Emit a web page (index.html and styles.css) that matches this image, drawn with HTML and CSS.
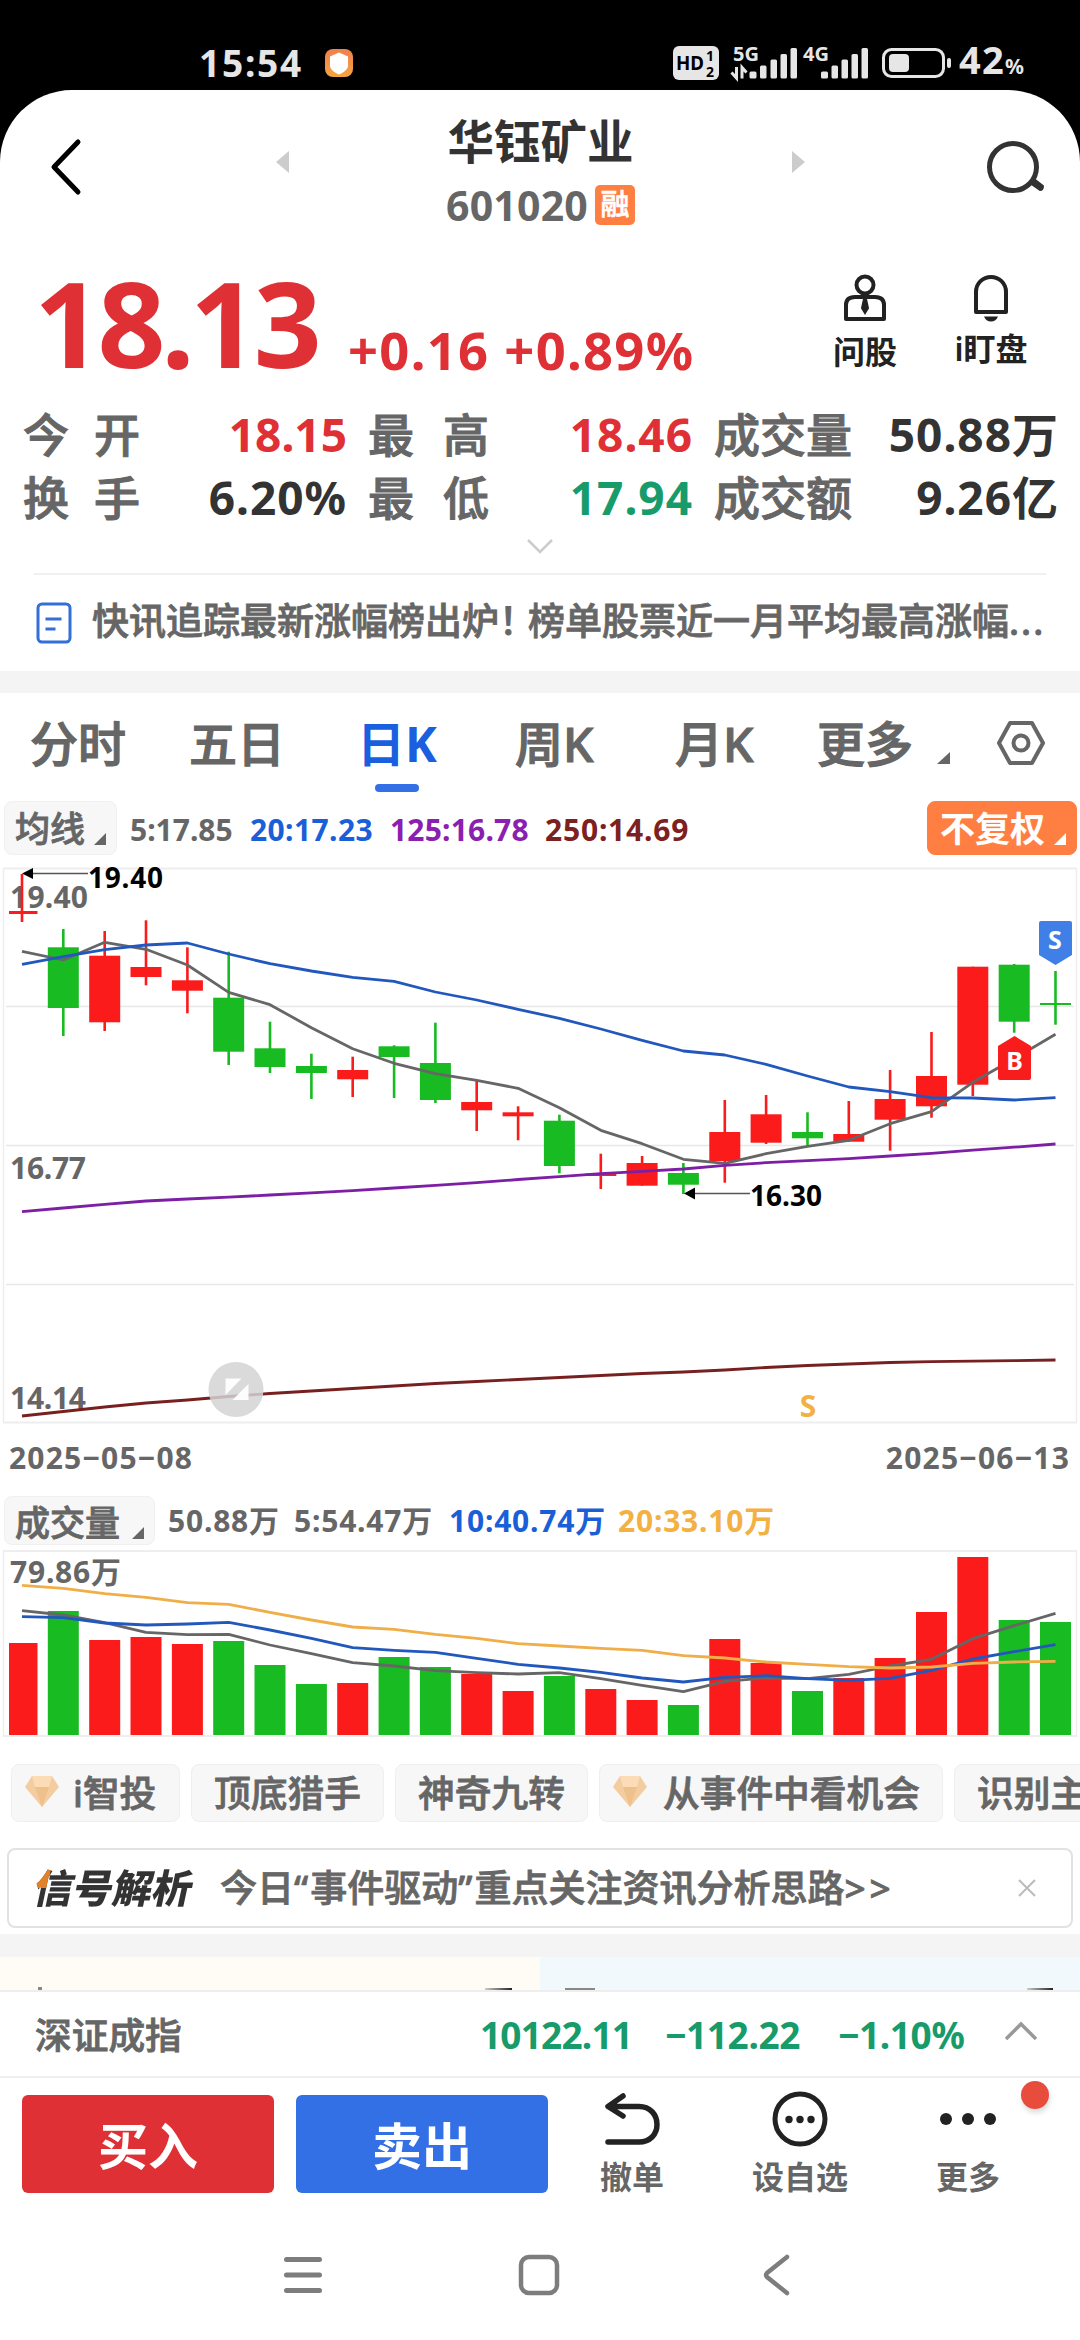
FILE: index.html
```html
<!DOCTYPE html>
<html lang="zh-CN">
<head>
<meta charset="utf-8">
<title>华钰矿业 601020</title>
<link rel="stylesheet" href="styles.css">
</head>
<body>
<div class="phone">
  <div class="status">
    <span class="clock">15:54</span>
    <svg class="status-app" width="28" height="28" viewBox="0 0 28 28"><defs><linearGradient id="og" x2="0" y2="1"><stop stop-color="#ef8050"/><stop offset="1" stop-color="#f5a540"/></linearGradient></defs><rect width="28" height="28" rx="8" fill="url(#og)"/><path d="M14 3.500l9 4v9c0 4-5 7.500-9 9-4-1.500-9-5-9-9v-9z" fill="#fff"/></svg>
    <svg class="status-icons" width="290" height="44" viewBox="670 40 290 44">
      <rect x="673" y="45" width="46" height="34" rx="6" fill="#e6e6e6"/>
      <g class="st-dark"><text x="676" y="69" font-size="19" textLength="28" lengthAdjust="spacingAndGlyphs">HD</text><text x="706" y="60" font-size="14">1</text><text x="706" y="75.500" font-size="14">2</text></g>
      <g class="st-light"><text x="733" y="60" font-size="20">5G</text><text x="803" y="60" font-size="20">4G</text></g>
      <g fill="#e6e6e6">
        <rect x="749.500" y="70.500" width="7" height="7" rx="1.500"/><rect x="760" y="64.500" width="6.500" height="13" rx="1.500"/><rect x="770.500" y="58.500" width="6.500" height="19" rx="1.500"/><rect x="780.500" y="53" width="6.500" height="24.500" rx="1.500"/><rect x="790.500" y="47" width="6.500" height="30.500" rx="1.500"/>
        <rect x="821" y="70.500" width="7" height="7" rx="1.500"/><rect x="831.500" y="64.500" width="6.500" height="13" rx="1.500"/><rect x="841.500" y="58.500" width="6.500" height="19" rx="1.500"/><rect x="851.500" y="53" width="6.500" height="24.500" rx="1.500"/><rect x="861.500" y="47" width="6.500" height="30.500" rx="1.500"/>
      </g>
      <path d="M736.500 66v11l-5-5.500M742 77.500V66.500l4.500 5" stroke="#e6e6e6" stroke-width="3" fill="none"/>
      <rect x="883.500" y="48.500" width="60" height="27" rx="8" fill="none" stroke="#e6e6e6" stroke-width="3"/>
      <rect x="889" y="53" width="20" height="18" rx="4" fill="#e6e6e6"/>
      <rect x="947" y="57" width="4" height="10" rx="2" fill="#e6e6e6"/>
    </svg>
    <span class="battery">42<small>%</small></span>
  </div>

  <main class="app">
    <header class="head">
      <svg class="back" width="32" height="60" viewBox="0 0 32 60"><path d="M28 5L4 30l24 25" fill="none" stroke="#000" stroke-width="5" stroke-linecap="round" stroke-linejoin="round"/></svg>
      <svg class="tri" width="13" height="22" viewBox="0 0 13 22"><path d="M13 0v22L0 11z" fill="#ccc"/></svg>
      <div class="title">
        <h1>华钰矿业</h1>
        <div class="code"><span>601020</span><b>融</b></div>
      </div>
      <svg class="tri" width="13" height="22" viewBox="0 0 13 22"><path d="M0 0v22L13 11z" fill="#ccc"/></svg>
      <svg class="search" width="60" height="60" viewBox="0 0 60 60"><circle cx="29" cy="30" r="23.500" fill="none" stroke="#333" stroke-width="5"/><path d="M46 46l4-4 9 7q0 4-3 4z" fill="#333" stroke="#333" stroke-width="2" stroke-linejoin="round"/></svg>
    </header>

    <section class="quote">
      <span class="price">18.13</span>
      <span class="change">+0.16 +0.89%</span>
      <div class="tool t1">
        <svg width="44" height="48" viewBox="0 0 44 48" fill="none" stroke="#222" stroke-width="4"><circle cx="22" cy="11" r="8.500"/><path d="M3 45V31q0-8 9-8h20q9 0 9 8v14z" stroke-linejoin="round"/><path d="M21 25h2l2 9-3 5-3-5z" fill="#222" stroke-width="2"/></svg>
        <span>问股</span>
      </div>
      <div class="tool t2">
        <svg width="44" height="48" viewBox="0 0 44 48"><path d="M7 38V18C7 9 14 3 22 3s15 6 15 15v20z" fill="none" stroke="#222" stroke-width="4" stroke-linejoin="round"/><path d="M15 42.500h14q-2 5-7 5t-7-5z" fill="#222"/></svg>
        <span>i盯盘</span>
      </div>
    </section>

    <section class="stats">
      <span class="wide">今开</span><em class="up open">18.15</em><span class="wide hi">最高</span><em class="up">18.46</em><span>成交量</span><em>50.88万</em>
      <span class="wide">换手</span><em>6.20%</em><span class="wide hi">最低</span><em class="down">17.94</em><span>成交额</span><em>9.26亿</em>
    </section>
    <svg class="expand" width="28" height="16" viewBox="0 0 28 16"><path d="M2 1l12 12L26 1" fill="none" stroke="#ccc" stroke-width="2.500"/></svg>

    <a class="news">
      <svg width="36" height="42" viewBox="0 0 36 42" fill="none" stroke="#336fd8" stroke-width="3"><rect x="2" y="2" width="32" height="38" rx="4"/><path d="M9.500 17h16M9.500 27h10"/></svg>
      <span>快讯追踪最新涨幅榜出炉<i>！</i>榜单股票近一月平均最高涨幅<tt>...</tt></span>
    </a>
    <div class="band"></div>

    <nav class="tabs">
      <span class="tab-a">分时</span><span class="tab-b">五日</span><span class="tab-c on">日K</span><span class="tab-d">周K</span><span class="tab-e">月K</span><span class="tab-f">更多</span>
      <svg class="corner" width="13" height="12" viewBox="0 0 13 12"><path d="M13 0v12H0z" fill="#666"/></svg>
      <svg class="gear" width="48" height="46" viewBox="0 0 48 46" fill="none" stroke="#666" stroke-width="4"><path d="M13 3h22l11 20-11 20H13L2 23z" stroke-linejoin="round"/><circle cx="24" cy="23" r="7.500"/></svg>
    </nav>

    <div class="legend ma">
      <button class="pill"><span>均线</span><svg width="12" height="12" viewBox="0 0 12 12"><path d="M12 0v12H0z" fill="#666"/></svg></button>
      <span class="l1">5:17.85</span><span class="l2 blue">20:17.23</span><span class="l3 purple">125:16.78</span><span class="l4 maroon">250:14.69</span>
      <button class="pill adjust"><span>不复权</span><svg width="12" height="12" viewBox="0 0 12 12"><path d="M12 0v12H0z" fill="#fff"/></svg></button>
    </div>

    <svg class="kchart" id="kchart" width="1080" height="570" viewBox="0 860 1080 570">
      <path d="M3.500 868V1422.500M1076.500 868V1422.500" stroke="#eee" stroke-width="1.500"/>
      <path d="M3 868.500H1077M3 1422.500H1077" stroke="#eee" stroke-width="2"/>
      <path d="M6 1006.500H1074M6 1145.500H1074M6 1284.500H1074" stroke="#e8e8e8" stroke-width="1.500"/>
      <g class="axis"><text x="10" y="908" textLength="78">19.40</text><text x="10" y="1179" textLength="76">16.77</text><text x="10" y="1409" textLength="76">14.14</text></g>
      <g id="candles"></g>
      <g id="klines" class="lines"></g>
      <g class="mark"><text x="88" y="888" textLength="75">19.40</text><text x="750" y="1206" textLength="72">16.30</text></g>
      <path d="M32 873.500H88M693 1193.500H750" stroke="#555" stroke-width="1.500"/>
      <path d="M22 873.500l11-5.500v11zM684 1193.500l11-6v12z"/>
      <path d="M1041 921h29q2 0 2 2v32l-16.500 10-16.500-10v-32q0-2 2-2z" fill="#4080e6"/>
      <path d="M1014.500 1036l16.500 10v32q0 2-2 2h-29q-2 0-2-2v-32z" fill="#f81c1c"/>
      <g class="flag"><text x="1055" y="949">S</text><text x="1014.500" y="1070">B</text></g>
      <circle cx="236" cy="1389.500" r="27.500" fill="#d3d3d3" fill-opacity=".85"/>
      <path d="M225.500 1378.500h16l-16 16.500zM248.500 1384v16h-16z" fill="#fff" fill-opacity=".95"/>
      <text class="s-mark" x="808" y="1417">S</text>
    </svg>
    <div class="dates"><span>2025−05−08</span><span>2025−06−13</span></div>

    <div class="legend vol">
      <button class="pill"><span>成交量</span><svg width="12" height="12" viewBox="0 0 12 12"><path d="M12 0v12H0z" fill="#666"/></svg></button>
      <span class="v1">50.88万</span><span class="v2">5:54.47万</span><span class="v3 blue">10:40.74万</span><span class="v4 amber">20:33.10万</span>
    </div>
    <svg class="vchart" width="1080" height="190" viewBox="0 1549 1080 190">
      <path d="M3.500 1551V1736M1076.500 1551V1736" stroke="#eee" stroke-width="1.500"/>
      <path d="M3 1551H1077M3 1736H1077" stroke="#eee" stroke-width="2"/>
      <text class="axis" x="10" y="1583" textLength="111">79.86万</text>
      <g id="bars"></g>
      <g id="vlines" class="lines"></g>
    </svg>

    <div class="chips">
      <span class="gem"><svg width="34" height="31" viewBox="0 0 34 31"><path d="M7 0h20l7 11-17 20L0 11z" fill="#f3cda0"/><path d="M7 0h20l-3 11H10z" fill="#fbdcb6"/><path d="M10 11h14l-7 20z" fill="#eec08c"/></svg>i智投</span>
      <span>顶底猎手</span><span>神奇九转</span>
      <span class="gem long"><svg width="34" height="31" viewBox="0 0 34 31"><path d="M7 0h20l7 11-17 20L0 11z" fill="#f3cda0"/><path d="M7 0h20l-3 11H10z" fill="#fbdcb6"/><path d="M10 11h14l-7 20z" fill="#eec08c"/></svg>从事件中看机会</span>
      <span>识别主力</span>
    </div>

    <div class="banner">
      <strong>信号解析</strong>
      <span>今日<q>“</q>事件驱动<q>”</q>重点关注资讯分析思路<i>&gt;&gt;</i></span>
      <svg width="18" height="18" viewBox="0 0 18 18"><path d="M1 1l16 16M17 1L1 17" stroke="#bbb" stroke-width="2"/></svg>
    </div>
    <div class="band low"></div>
    <div class="panels">
      <div class="warm"><i class="p1"></i><i class="p2"></i></div>
      <div class="cool"><i class="p3"></i><i class="p4"></i></div>
    </div>
  </main>

  <div class="index">
    <span class="name">深证成指</span><b class="n1">10122.11</b><b class="n2">−112.22</b><b class="n3">−1.10%</b>
    <svg width="34" height="20" viewBox="0 0 34 20"><path d="M2 18L17 3l15 15" fill="none" stroke="#999" stroke-width="3.500"/></svg>
  </div>

  <footer class="trade">
    <button class="buy">买入</button>
    <button class="sell">卖出</button>
    <div class="act a1"><svg width="58" height="56" viewBox="0 0 58 56" fill="none" stroke="#222" stroke-width="5.500" stroke-linecap="round" stroke-linejoin="round"><path d="M20 5L5 15.500l15 9.500M6 15.500h30c11 0 18 8 18 18s-7 17.500-18 17.500H5"/></svg><span>撤单</span></div>
    <div class="act a2"><svg width="58" height="56" viewBox="0 0 58 56"><circle cx="29" cy="28" r="25" fill="none" stroke="#222" stroke-width="5"/><g fill="#222"><circle cx="18" cy="28.500" r="3.700"/><circle cx="29" cy="28.500" r="3.700"/><circle cx="40" cy="28.500" r="3.700"/></g></svg><span>设自选</span></div>
    <div class="act a3"><svg width="58" height="56" viewBox="0 0 58 56" fill="#222"><circle cx="7" cy="28" r="6"/><circle cx="29" cy="28" r="6"/><circle cx="51" cy="28" r="6"/></svg><span>更多</span><i class="dot"></i></div>
  </footer>

  <nav class="sysnav">
    <svg width="38" height="42" viewBox="0 0 38 42"><path d="M2.500 5.500h33M2.500 21h33M2.500 36.500h33" stroke="#7d7d7d" stroke-width="5" stroke-linecap="round"/></svg>
    <svg width="42" height="42" viewBox="0 0 42 42"><rect x="3" y="3" width="36" height="36" rx="8" fill="none" stroke="#7d7d7d" stroke-width="4.500"/></svg>
    <svg width="28" height="42" viewBox="0 0 28 42"><path d="M25 3L5 19q-2 2 0 4l20 16" fill="none" stroke="#7d7d7d" stroke-width="4.500" stroke-linecap="round"/></svg>
  </nav>
</div>
<script src="chart.js"></script>
</body>
</html>
```
FILE: styles.css
```css
* { box-sizing: border-box; margin: 0; padding: 0; }
body { background: #000; font-family: "Noto Sans", "Noto Sans CJK SC", sans-serif; color: #666; font-weight: 600; }
button { border: 0; font: inherit; color: inherit; }
svg { display: block; flex: none; }
.phone { width: 1080px; height: 2340px; overflow: hidden; display: flex; flex-direction: column; background: #000; white-space: nowrap; }

.status { height: 90px; flex: none; display: flex; align-items: center; padding: 35px 0 0 199px; color: #e6e6e6; }
.clock { font-size: 37px; line-height: 48px; width: 126px; letter-spacing: 1.800px; font-weight: 700; }
.status-icons { margin-left: 317px; }
.battery { font-size: 38px; line-height: 48px; margin-left: -1px; font-weight: 700; letter-spacing: 1.200px; }
.battery small { font-size: 21px; font-weight: 700; }
.st-dark { fill: #000; font-weight: 700; }
.st-light { fill: #e6e6e6; font-weight: 700; }

.app { height: 1900px; flex: none; background: #fff; border-radius: 72px 72px 0 0; overflow: hidden; display: flex; flex-direction: column; }
.head { height: 170px; flex: none; display: flex; align-items: flex-start; padding: 23px 36px 0 50px; }
.head .back { margin-top: 24px; }
.head .tri { margin-top: 38px; }
.head .tri:nth-of-type(2) { margin-left: 194px; }
.head .title { width: 503px; text-align: center; }
.title h1 { font-size: 46.500px; line-height: 56px; font-weight: 700; color: #333; }
.title .code { display: flex; justify-content: center; align-items: center; gap: 7px; height: 42px; margin-top: 15px; font-size: 41px; line-height: 42px; font-weight: 700; }
.title .code span { letter-spacing: .2px; }
.title .code b { width: 40px; height: 40px; border-radius: 5px; background: #ff7f42; color: #fff; font-size: 29px; line-height: 38px; font-weight: 500; -webkit-text-stroke: .6px; }
.head .search { margin-left: 179px; margin-top: 24px; }

.quote { height: 140px; flex: none; display: flex; align-items: flex-start; padding-left: 34px; color: #df3035; }
.price { font-size: 119px; line-height: 124px; width: 314px; font-weight: 700; letter-spacing: -4.500px; }
.change { font-size: 52.500px; line-height: 56px; margin-top: 62px; width: 479px; font-weight: 700; letter-spacing: 1.300px; }
.tool { display: flex; flex-direction: column; align-items: center; color: #222; font-size: 32px; line-height: 40px; width: 76px; margin-top: 14px; }
.tool span { margin-top: 10px; font-weight: 600; }
.t2 { margin-left: 50px; }
.t2 span { margin-top: 7px; }

.stats { flex: none; height: 131px; display: grid; grid-template-columns: 115px 209px 139px 207px 158px 208px; grid-template-rows: 63.500px 63.500px; padding: 2px 0 0 23px; align-items: center; font-size: 46px; line-height: 60px; }
.stats span { font-weight: 500; -webkit-text-stroke: 1px; }
.stats span:nth-of-type(3n) { padding-left: 21px; }
.stats .wide { letter-spacing: 25px; }
.stats .wide.hi { padding-left: 21px; letter-spacing: 29px; }
.stats em { font-style: normal; color: #333; text-align: right; font-weight: 700; letter-spacing: 1px; }
.stats em.up { color: #df3035; }
.stats em.open { letter-spacing: 0; }
.stats em.down { color: #179b6b; }
.expand { margin: 8px auto 0; }

.news { margin: 18px 34px 0; height: 98px; flex: none; border-top: 2px solid #f0f0f0; display: flex; align-items: flex-start; gap: 20px; padding: 27px 0 0 2px; }
.news span { font-size: 37px; line-height: 38px; font-weight: 500; -webkit-text-stroke: .8px; }
.news i { font-style: normal; letter-spacing: -8px; }
.news tt { font-family: inherit; letter-spacing: 2px; }
.band { height: 22px; flex: none; background: #f4f4f4; }

.tabs { height: 101px; flex: none; display: flex; padding: 19px 0 0 30px; font-size: 48px; line-height: 64px; font-weight: 500; -webkit-text-stroke: 1.200px; }
.tab-a { width: 159px; } .tab-b { width: 168px; } .tab-c { width: 158px; } .tab-d { width: 160px; } .tab-e { width: 142px; } .tab-f { width: 120px; }
.tabs .on { color: #1a5fe0; font-weight: 700; -webkit-text-stroke: 0; }
.tabs .on::after { content: ""; display: block; width: 44px; height: 8px; border-radius: 4px; background: #336fe5; margin: 8px 0 0 18px; }
.tabs .corner { margin-top: 40px; }
.tabs .gear { margin: 8px 0 0 47px; }

.legend { flex: none; display: flex; align-items: center; font-size: 30px; font-weight: 700; padding: 0 3px 0 4px; }
.legend.ma { height: 66px; align-items: flex-start; margin-top: 7px; }
.legend > span { line-height: 57px; }
.pill { height: 54px; background: #f7f7f7; border: 1px solid #f0f0f0; border-radius: 8px; display: flex; align-items: flex-end; padding: 0 10px 9px; gap: 9px; font-size: 35px; font-weight: 500; -webkit-text-stroke: .8px; }
.pill span { line-height: 32px; }
.pill.adjust { background: #ff7f42; border-color: #ff7f42; color: #fff; margin-left: auto; padding-left: 12px; font-weight: 700; -webkit-text-stroke: 0; }
.ma .pill:first-child { width: 113px; margin-right: 13px; }
.l1 { width: 120px; } .l2 { width: 140px; letter-spacing: .4px; } .l3 { width: 155px; letter-spacing: .2px; } .l4 { letter-spacing: .8px; }
.blue { color: #1a5fd8; } .purple { color: #8b1fb0; } .maroon { color: #7d2020; } .amber { color: #f2b142; }

.kchart { margin-top: -7px; }
.axis { font-size: 30px; fill: #666; font-weight: 700; }
.mark { font-size: 28px; fill: #000; font-weight: 700; }
.flag { font-size: 25px; fill: #fff; font-weight: 700; text-anchor: middle; }
.s-mark { font-size: 30px; fill: #f2b142; font-weight: 700; text-anchor: middle; }
.lines { fill: none; stroke-width: 2.800; stroke-linejoin: round; }
.red { fill: #fb1b1b; } .green { fill: #18bb22; }
.dates { flex: none; display: flex; justify-content: space-between; padding: 6px 10px 0 9px; height: 66px; font-size: 30px; line-height: 44px; letter-spacing: 1.200px; font-weight: 700; }
.legend.vol { height: 49px; letter-spacing: .8px; }
.vol .pill { height: 49px; width: 151px; padding-bottom: 5px; gap: 12px; margin-right: 13px; letter-spacing: 0; }
.vol > span { line-height: 46px; }
.v1 { width: 126px; } .v2 { width: 155px; } .v3 { width: 169px; }
.vchart { margin-top: 4px; }

.chips { flex: none; display: flex; gap: 11px; margin: 25px 0 0 11px; height: 58px; }
.chips span { flex: none; width: 193px; border: 1px solid #efefef; border-radius: 8px; background: #f7f7f7; font-size: 36.700px; line-height: 56px; display: flex; justify-content: center; align-items: center; font-weight: 500; -webkit-text-stroke: .8px; }
.chips .gem { width: 169px; justify-content: flex-start; padding-left: 13px; gap: 14px; }
.chips .long { width: 344px; gap: 16px; }
.chips .gem svg { margin-top: -4px; }

.banner { flex: none; margin: 26px 7px 0; height: 80px; border: 2px solid #e2e2e2; border-radius: 8px; display: flex; align-items: center; padding-left: 26px; font-size: 37px; line-height: 50px; font-weight: 500; }
.banner strong { font-size: 39.500px; font-weight: 900; width: 185px; transform: skewX(-12deg); color: transparent; background: linear-gradient(#e2812a, #e2812a) 0 0 / 12px 25px no-repeat, linear-gradient(#333, #333); background-clip: text; -webkit-background-clip: text; }
.banner span { -webkit-text-stroke: .8px; }
.banner i { font-style: normal; letter-spacing: 4px; }
.banner svg { margin-left: auto; margin-right: 35px; }
.banner q { quotes: none; letter-spacing: 2px; }
.band.low { margin-top: 6px; height: 23px; }
.panels { flex: none; display: flex; height: 33px; }
.panels > div { width: 540px; display: flex; align-items: flex-end; }
.warm { background: #fffcf5; } .cool { background: #f1f9fd; }
.panels i { display: block; height: 2px; background: #888; }
.panels .p1 { width: 4px; height: 3px; margin-left: 38px; }
.panels .p2 { width: 27px; margin-left: 443px; background: linear-gradient(90deg, #ccc, #222); }
.panels .p3 { width: 30px; margin-left: 25px; }
.panels .p4 { width: 26px; margin-left: 432px; background: linear-gradient(90deg, #ccc, #222); }

.index { height: 88px; flex: none; background: #fff; border-top: 2px solid #eee; border-bottom: 2px solid #f0f0f0; display: flex; align-items: center; padding: 0 42px 0 35px; }
.name { font-size: 36.700px; width: 445px; font-weight: 500; -webkit-text-stroke: .8px; margin-top: -2px; }
.index b { font-size: 37px; font-weight: 700; color: #179b6b; letter-spacing: -.4px; }
.index .n1 { width: 185px; letter-spacing: -.8px; } .n2 { width: 173px; }
.index svg { margin-left: auto; margin-top: -6px; }

.trade { height: 142px; flex: none; background: #fff; display: flex; align-items: flex-start; padding: 17px 0 0 22px; }
.trade button { width: 252px; height: 98px; border-radius: 6px; color: #fff; font-size: 50px; font-weight: 700; padding-bottom: 2px; }
.buy { background: #df3035; } .sell { background: #336fe5; margin-left: 22px; }
.act { width: 100px; display: flex; flex-direction: column; align-items: center; font-size: 32px; line-height: 40px; position: relative; margin-top: -4px; }
.act span { margin-top: 10px; }
.a1 { margin-left: 34px; } .a2 { margin-left: 68px; } .a3 { margin-left: 68px; }
.dot { position: absolute; left: 103px; top: -10px; width: 28px; height: 28px; border-radius: 50%; background: #e74c3c; box-shadow: 1px 4px 5px #0002; }

.sysnav { flex: 1; background: #fff; display: flex; align-items: flex-start; padding: 34px 0 0 284px; }
.sysnav svg:nth-child(2) { margin-left: 196px; }
.sysnav svg:nth-child(3) { margin-left: 202px; }
```
FILE: chart.js
```js
// Each row: direction, high, low, body top, body bottom (chart units).
const candles = [
  ['r', 874, 922, 911, 914], ['g', 929, 1036, 947.3, 1008], ['r', 931, 1031, 955.7, 1022.3],
  ['r', 920.3, 985.3, 967, 977], ['r', 947.3, 1013.3, 980.3, 990.7], ['g', 951.7, 1065, 997.7, 1051.7],
  ['g', 1021.7, 1073, 1048.3, 1067], ['g', 1053.7, 1099, 1066, 1073], ['r', 1056.7, 1097, 1070, 1079.3],
  ['g', 1045.3, 1098, 1046.3, 1057], ['g', 1022.7, 1103, 1063, 1100], ['r', 1080.7, 1131, 1102, 1110.3],
  ['r', 1106.3, 1140.3, 1112.3, 1116.3], ['g', 1114.7, 1173.3, 1120.7, 1166], ['r', 1153.7, 1189, 1173.5, 1176],
  ['r', 1156, 1185.7, 1163, 1185.7], ['g', 1163, 1194, 1173, 1184.7], ['r', 1100, 1182.7, 1132, 1161],
  ['r', 1095, 1144, 1114.3, 1142.7], ['g', 1112.3, 1145.3, 1132, 1138.3], ['r', 1101, 1141.7, 1134, 1141.7],
  ['r', 1070, 1150.7, 1099, 1119.7], ['r', 1032, 1117.7, 1076, 1106.3], ['r', 966.7, 1096, 966.7, 1084.7],
  ['g', 964, 1032.7, 964.7, 1021.7], ['g', 971, 1024.7, 1003, 1005]
];
const volumes = [1643, 1611, 1640, 1637, 1644, 1641, 1665, 1684, 1683, 1657, 1667, 1674, 1691, 1676, 1689, 1700, 1705, 1639, 1663, 1691, 1678, 1658, 1612, 1557, 1620, 1622];
const ma5 = [951.3, 960, 942.3, 949.3, 965, 992.3, 1004.7, 1027.7, 1048.7, 1063.3, 1073.7, 1080.3, 1088.3, 1107.7, 1130.3, 1143.7, 1159.3, 1163.3, 1153.7, 1146.3, 1140.3, 1123.7, 1111.7, 1082.3, 1058.7, 1034.3];
const ma20 = [964.3, 956.7, 949.7, 945, 943, 954, 963.7, 971, 977.3, 981.3, 992, 1000, 1009.3, 1018.3, 1029, 1040.3, 1051, 1055, 1064.3, 1076, 1087, 1091.7, 1097.7, 1098, 1100, 1097.7];
const ma125 = [1211.7, 1208, 1204.3, 1201, 1199, 1197.2, 1195, 1192.8, 1190.7, 1188, 1185.3, 1182.7, 1179.5, 1176.6, 1173.7, 1171.3, 1169, 1165.3, 1162.7, 1160.7, 1158.7, 1156, 1153.3, 1150.2, 1147.2, 1144];
const ma250 = [1416, 1411.5, 1407, 1403, 1400, 1396.5, 1393.5, 1391, 1388.5, 1386, 1383.5, 1381.5, 1379.5, 1377.5, 1375.5, 1373.5, 1372, 1370, 1367.5, 1365.5, 1364, 1362.5, 1361.7, 1361.2, 1360.6, 1360];
const v5 = [212, 225, 248, 277, 284, 283, 315, 341, 368, 378, 392, 398, 402, 398, 416, 436, 455, 424, 414, 416, 403, 378, 358, 296, 257, 220];
const v10 = [230, 233, 249, 255, 252, 247, 270, 295, 323, 331, 337, 355, 373, 384, 397, 414, 426, 412, 407, 416, 421, 415, 391, 357, 335, 314];
const v20 = [136, 145, 161, 172, 188, 193, 217, 240, 261, 268, 283, 295, 311, 318, 325, 331, 347, 354, 366, 373, 380, 384, 381, 370, 366, 364];

const x = i => 22 + i * 41.34;
const tone = d => (d === 'r' ? 'red' : 'green');
const rect = (c, px, py, w, h) => `<rect class="${c}" x="${px.toFixed(1)}" y="${py}" width="${w}" height="${h.toFixed(1)}"/>`;
const line = (ys, color) => `<polyline stroke="${color}" points="${ys.map((y, i) => x(i).toFixed(1) + ',' + y).join(' ')}"/>`;
const put = (id, html) => { document.getElementById(id).innerHTML = html; };

put('candles', candles.map(([d, hi, lo, top, bottom], i) =>
  rect(tone(d), x(i) - 1.3, hi, 2.6, lo - hi) + rect(tone(d), x(i) - (i ? 15.5 : 13), top, i ? 31 : 28.5, bottom - top)).join(''));
put('klines', line(ma5, '#666') + line(ma20, '#2258bd') + line(ma125, '#7d1fa5') + line(ma250, '#782020'));
put('bars', volumes.map((top, i) =>
  rect(tone(candles[i][0]), x(i) - (i ? 15.5 : 13), top, i ? 31 : 28.5, 1735 - top)).join(''));
const scale = v => v.map(n => +(1540 + n / 3).toFixed(1));
put('vlines', line(scale(v5), '#666') + line(scale(v10), '#2258bd') + line(scale(v20), '#f0ae48'));
```
